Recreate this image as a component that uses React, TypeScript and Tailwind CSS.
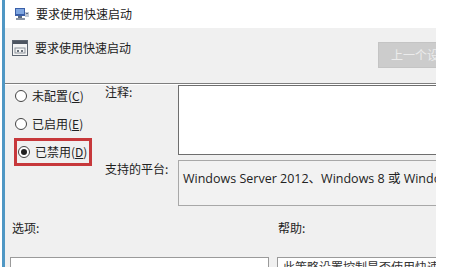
import React from 'react';

const cjk = { fontFamily: '"Noto Sans CJK SC", "Noto Sans", sans-serif' };

function PolicyIcon() {
  return (
    <svg width="16" height="14" viewBox="0 0 16 14">
      <rect x="1" y="1" width="10" height="8" fill="#3a5fa8" />
      <rect x="2" y="2" width="8" height="5" fill="#7fa6e0" />
      <rect x="4" y="9" width="4" height="2" fill="#5a6a80" />
      <rect x="2" y="11" width="9" height="2" fill="#8a94a4" />
      <rect x="11" y="5" width="4" height="5" fill="#c0c8d4" />
      <rect x="12" y="6" width="2" height="1" fill="#5a6a80" />
    </svg>
  );
}

function SettingIcon() {
  return (
    <svg width="16" height="16" viewBox="0 0 16 16">
      <rect x="0.5" y="0.5" width="15" height="15" fill="#f4f4f4" stroke="#5d6570" />
      <rect x="1" y="1" width="14" height="3" fill="#4d5560" />
      <rect x="3" y="8" width="10" height="5" fill="none" stroke="#8a919a" />
      <rect x="5" y="10" width="2" height="2" fill="#6a717a" />
      <rect x="9" y="10" width="2" height="2" fill="#6a717a" />
    </svg>
  );
}

function Radio({ label, checked }: { label: React.ReactNode; checked?: boolean }) {
  return (
    <div className="flex items-center gap-[5px] h-[16px] shrink-0">
      <span className="w-[12px] h-[12px] rounded-full border border-[#444] bg-white flex items-center justify-center shrink-0">
        {checked && <span className="w-[6px] h-[6px] rounded-full bg-[#222]" />}
      </span>
      <span className="text-[12px] text-[#222] leading-none whitespace-nowrap">{label}</span>
    </div>
  );
}

export default function App() {
  return (
    <div className="w-[450px] h-[267px] bg-white flex overflow-hidden" style={cjk}>
      <div className="w-[2px] shrink-0 bg-white" />
      <div className="w-[3px] shrink-0 bg-[#4f97c4]" />
      <div className="w-[431px] shrink-0 flex flex-col overflow-hidden">
        {/* title bar */}
        <div className="h-[28px] shrink-0 bg-white flex items-center pl-[9px] gap-[6px]">
          <PolicyIcon />
          <span className="text-[12px] text-[#222]">要求使用快速启动</span>
        </div>

        <div className="flex-1 bg-[#f0f0f0] flex flex-col overflow-hidden">
          {/* header */}
          <div className="h-[55px] shrink-0 flex items-start justify-between">
            <div className="flex items-center gap-[7px] pl-[7px] mt-[11px]">
              <SettingIcon />
              <span className="text-[12px] text-[#222]">要求使用快速启动</span>
            </div>
            <div className="mt-[14px] w-[58px] h-[26px] bg-[#cccccc] border border-[#c4c4c4] border-r-0 flex items-center pl-[12px] overflow-hidden whitespace-nowrap">
              <span className="text-[12px] text-[#ececec]">上一个设置</span>
            </div>
          </div>
          <div className="h-[2px] shrink-0 border-t border-[#7e7e7e] bg-white" />

          {/* body */}
          <div className="flex shrink-0">
            <div className="w-[100px] shrink-0 pl-[10px] pt-[3px] flex flex-col gap-[12px]">
              <Radio label={<>未配置(<span className="underline">C</span>)</>} />
              <Radio label={<>已启用(<span className="underline">E</span>)</>} />
              <div className="-ml-[1px] -mt-[6px] w-[78px] h-[28px] border-[3px] border-[#c7383b] flex items-center pl-[1px]">
                <Radio checked label={<>已禁用(<span className="underline">D</span>)</>} />
              </div>
            </div>
            <div className="flex-1 min-w-0 flex flex-col gap-[5px]">
              <div className="flex">
                <div className="w-[73px] shrink-0 text-[12px] text-[#222] -mt-[2px]">注释:</div>
                <div className="flex-1 h-[70px] bg-white border border-[#6e6e6e] border-r-0" />
              </div>
              <div className="flex">
                <div className="w-[73px] shrink-0 text-[12px] text-[#222] whitespace-nowrap">支持的平台:</div>
                <div className="flex-1 min-w-0 h-[46px] bg-[#f2f2f2] border border-[#a8a8a8] border-r-0 pl-[4px] pt-[3px] overflow-hidden whitespace-nowrap">
                  <span className="text-[12.5px] text-[#222]" style={{ fontFamily: '"Open Sans", "Noto Sans CJK SC", sans-serif' }}>
                    Windows Server 2012、Windows 8 或 Windows RT
                  </span>
                </div>
              </div>
            </div>
          </div>

          {/* options / help */}
          <div className="flex shrink-0 mt-[13px] text-[12px] text-[#222]">
            <div className="w-[273px] pl-[7px]">选项:</div>
            <div className="flex-1">帮助:</div>
          </div>
          <div className="flex shrink-0 mt-[20px]">
            <div className="ml-[5px] w-[259px] h-[30px] bg-white border border-[#9a9a9a]" />
            <div className="ml-[8px] flex-1 min-w-0 h-[30px] bg-white border border-[#9a9a9a] border-r-0 pl-[5px] pt-[2px] overflow-hidden whitespace-nowrap">
              <span className="block text-[12px] leading-[14px] text-[#333]">此策略设置控制是否使用快速启动</span>
            </div>
          </div>
        </div>
      </div>
      <div className="flex-1 bg-white" />
    </div>
  );
}
